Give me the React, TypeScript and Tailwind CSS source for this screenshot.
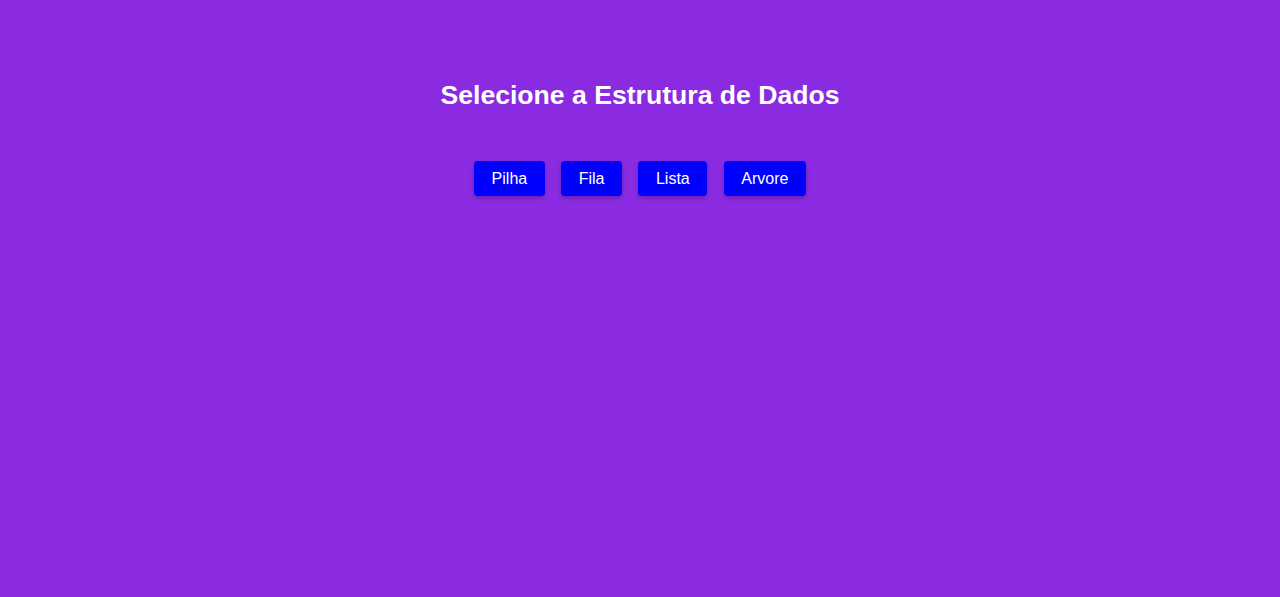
import React from 'react';

const ESTRUTURAS = ['Pilha', 'Fila', 'Lista', 'Arvore'];

const App: React.FC = () => {
  return (
    <div className="min-h-screen bg-[#8a2be2] font-['Liberation_Sans',Arial,sans-serif] text-white">
      <div className="flex flex-col items-center pt-[80px]">
        <h2 className="text-[26.6px] leading-[30px] font-bold">Selecione a Estrutura de Dados</h2>
        <div className="mt-[51px] flex items-center gap-[16.5px]">
          {ESTRUTURAS.map((nome) => (
            <button
              key={nome}
              className="flex h-[35px] items-center rounded-[4px] bg-[#0000ff] px-[17.5px] text-base leading-[19px] text-white shadow-[0_2px_4px_rgba(0,0,0,0.25)]"
            >
              {nome}
            </button>
          ))}
        </div>
      </div>
    </div>
  );
};

export default App;
